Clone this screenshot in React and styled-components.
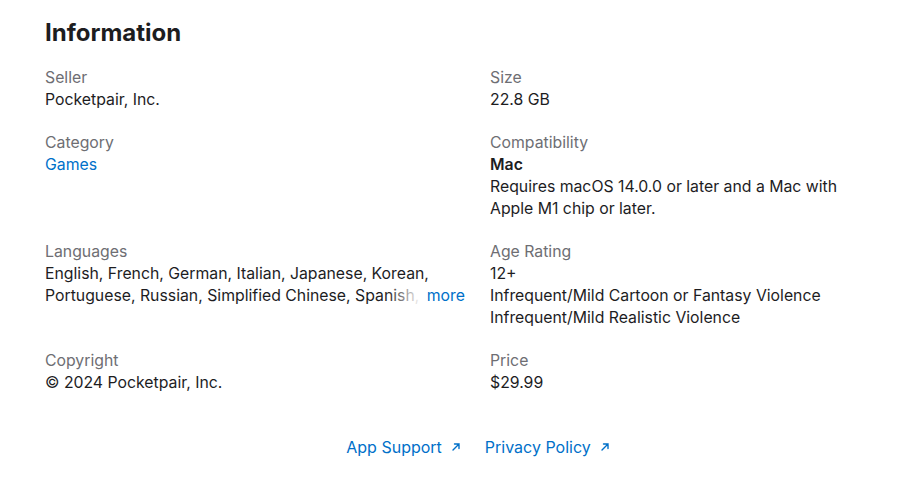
import React from 'react';
import styled, { createGlobalStyle } from 'styled-components';

const GlobalStyle = createGlobalStyle`
  body {
    margin: 0;
    background: #fff;
    font-family: Inter, "Noto Sans", sans-serif;
    color: #1d1d1f;
  }
`;

const Page = styled.div`
  padding: 17px 45px 0 45px;
  width: 826px;
`;

const Title = styled.h2`
  font-size: 24px;
  font-weight: 700;
  margin: 0 0 18px;
  line-height: 32px;
`;

const Grid = styled.dl`
  display: grid;
  grid-template-columns: 445px 360px;
  row-gap: 21px;
  margin: 0;
  font-size: 15.8px;
  line-height: 22px;
`;

const Item = styled.div``;

const Label = styled.dt`
  color: #6e6e73;
`;

const Value = styled.dd`
  margin: 0;
  color: ${p => (p.link ? '#0070c9' : '#1d1d1f')};
  font-weight: ${p => (p.bold ? 600 : 400)};
`;

const Clamp = styled.dd`
  margin: 0;
  position: relative;
  width: 420px;
`;

const LastLine = styled.div`
  white-space: nowrap;
  overflow: hidden;
`;

const More = styled.span`
  position: absolute;
  right: 0;
  bottom: 0;
  padding-left: 40px;
  color: #0070c9;
  background: linear-gradient(to right, rgba(255,255,255,0), #fff 34px);
`;

const Links = styled.div`
  display: flex;
  justify-content: center;
  gap: 24px;
  margin-top: 43px;
  padding-left: 40px;
  font-size: 16px;
`;

const LinkItem = styled.a`
  color: #0070c9;
  text-decoration: none;
  display: flex;
  align-items: center;
  gap: 9px;
`;

const Arrow = () => (
  <svg width="10" height="10" viewBox="0 0 10 10" fill="none" stroke="#0070c9" strokeWidth="1.4" strokeLinecap="round">
    <path d="M2 8L8 2M3.5 2H8V6.5" />
  </svg>
);

export default function App() {
  return (
    <Page>
      <GlobalStyle />
      <Title>Information</Title>
      <Grid>
        <Item>
          <Label>Seller</Label>
          <Value>Pocketpair, Inc.</Value>
        </Item>
        <Item>
          <Label>Size</Label>
          <Value>22.8 GB</Value>
        </Item>
        <Item>
          <Label>Category</Label>
          <Value link>Games</Value>
        </Item>
        <Item>
          <Label>Compatibility</Label>
          <Value bold>Mac</Value>
          <Value>Requires macOS 14.0.0 or later and a Mac with Apple M1 chip or later.</Value>
        </Item>
        <Item>
          <Label>Languages</Label>
          <Clamp>
            <div>English, French, German, Italian, Japanese, Korean,</div>
            <LastLine>Portuguese, Russian, Simplified Chinese, Spanish, Traditional Chinese</LastLine>
            <More>more</More>
          </Clamp>
        </Item>
        <Item>
          <Label>Age Rating</Label>
          <Value>12+</Value>
          <Value>Infrequent/Mild Cartoon or Fantasy Violence</Value>
          <Value>Infrequent/Mild Realistic Violence</Value>
        </Item>
        <Item>
          <Label>Copyright</Label>
          <Value>© 2024 Pocketpair, Inc.</Value>
        </Item>
        <Item>
          <Label>Price</Label>
          <Value>$29.99</Value>
        </Item>
      </Grid>
      <Links>
        <LinkItem href="#">App Support <Arrow /></LinkItem>
        <LinkItem href="#">Privacy Policy <Arrow /></LinkItem>
      </Links>
    </Page>
  );
}
